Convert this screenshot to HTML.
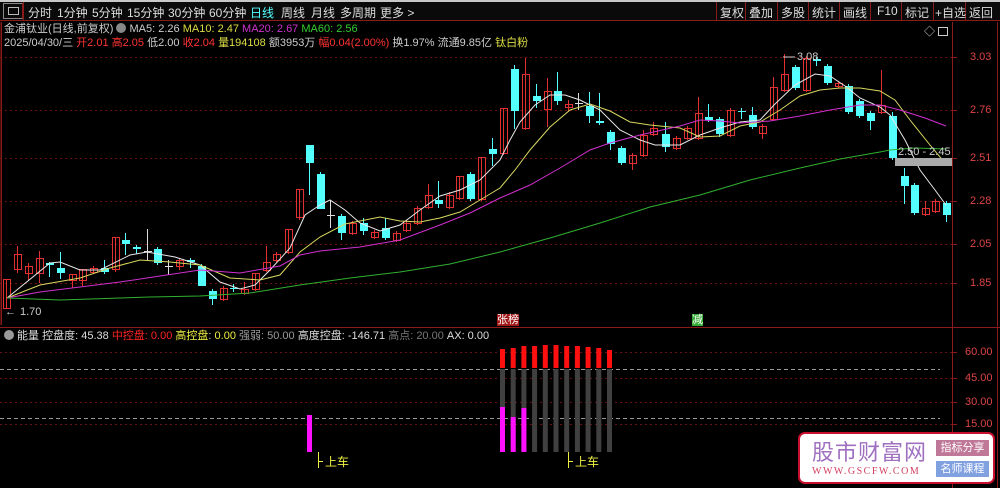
<!DOCTYPE html>
<html><head><meta charset="utf-8"><style>
*{margin:0;padding:0;box-sizing:border-box}
body{width:1000px;height:488px;background:#000;overflow:hidden;font-family:"Liberation Sans","Noto Sans CJK SC",sans-serif;position:relative;color:#ddd}
.t{position:absolute;white-space:nowrap;font-size:11px;line-height:14px}
#tb{position:absolute;left:0;top:0;width:1000px;height:21px;background:#0a0a0a;border-bottom:1px solid #8b1a1a;border-top:2px solid #c8c8c8}
#tb span{position:absolute;top:2px;font-size:12px;color:#ddd}
.rb{position:absolute;top:0;height:19px;border-left:1px solid #8b1a1a}
</style></head><body>
<div id="tb">
<div style="position:absolute;left:3px;top:1px;width:20px;height:16px;border:1px solid #888;border-right:1px solid #8b1a1a"></div>
<div style="position:absolute;left:8px;top:5px;width:11px;height:8px;border:1px solid #bbb"></div>
<div class="rb" style="left:23px"></div>
<span style="left:28px">分时</span><span style="left:57px">1分钟</span><span style="left:92px">5分钟</span><span style="left:127px">15分钟</span><span style="left:168px">30分钟</span><span style="left:209px">60分钟</span><span style="left:250px;color:#5ff">日线</span><span style="left:281px">周线</span><span style="left:311px">月线</span><span style="left:340px">多周期</span><span style="left:380px">更多 &gt;</span>
<div class="rb" style="left:716px"></div><div class="rb" style="left:745px"></div><div class="rb" style="left:777px"></div><div class="rb" style="left:808px"></div><div class="rb" style="left:839px"></div><div class="rb" style="left:870px"></div><div class="rb" style="left:901px"></div><div class="rb" style="left:933px"></div><div class="rb" style="left:965px"></div>
<span style="left:720px">复权</span><span style="left:749px">叠加</span><span style="left:781px">多股</span><span style="left:812px">统计</span><span style="left:843px">画线</span><span style="left:877px">F10</span><span style="left:905px">标记</span><span style="left:935px">+自选</span><span style="left:969px">返回</span>
</div>
<div class="t" style="left:4px;top:22px;color:#ccc">金浦钛业(日线,前复权) <span style="display:inline-block;width:10px;height:10px;border-radius:5px;background:#888;vertical-align:-1px"></span> MA5: 2.26 <span style="color:#dd4">MA10: 2.47</span> <span style="color:#c3c">MA20: 2.67</span> <span style="color:#3c3">MA60: 2.56</span></div>
<div class="t" style="left:4px;top:36px;color:#ccc">2025/04/30/三 <span style="color:#f33">开2.01 高2.05</span> 低2.00 <span style="color:#f33">收2.04</span> <span style="color:#dd4">量194108</span> 额3953万 <span style="color:#f33">幅0.04(2.00%)</span> 换1.97% 流通9.85亿 <span style="color:#dd4">钛白粉</span></div>
<div class="t" style="left:924px;top:25px;color:#ccc;font-size:11px">◇</div>
<div style="position:absolute;left:938px;top:27px;width:10px;height:9px;border:1px solid #ccc"></div>
<svg id="s" width="1000" height="488" style="position:absolute;left:0;top:0" xmlns="http://www.w3.org/2000/svg"></svg>
<div class="t" style="left:20px;top:305px;color:#ccc">1.70</div>
<div class="t" style="left:5px;top:305px;color:#ccc">←</div>
<div class="t" style="left:797px;top:50px;color:#ccc;font-size:11px">3.08</div>
<div class="t" style="left:898px;top:145px;color:#ccc;font-size:11px">2.50 - 2.45</div>
<div class="t" style="left:497px;top:314px;color:#fff;background:#a01818;font-size:11px;line-height:12px">张榜</div>
<div class="t" style="left:692px;top:314px;color:#fff;background:#3a3;font-size:11px;line-height:12px">减</div>
<div class="t" style="left:4px;top:329px;color:#ddd"><span style="display:inline-block;width:10px;height:10px;border-radius:5px;background:#999;vertical-align:-1px"></span> 能量 控盘度: 45.38 <span style="color:#f22">中控盘: 0.00</span> <span style="color:#ee4">高控盘</span>: <span style="color:#ee4">0.00</span> <span style="color:#999">强弱: 50.00</span> 高度控盘: -146.71 <span style="color:#777">高点: 20.00</span> AX: 0.00</div>
<div class="t" style="left:325px;top:455px;color:#ee4;font-size:12px">上车</div>
<div class="t" style="left:575px;top:455px;color:#ee4;font-size:12px">上车</div>
<div id="ax"></div>
<div style="position:absolute;left:798px;top:432px;width:197px;height:52px;background:#fff;border:2px solid #c8102e;border-radius:7px">
<div style="position:absolute;left:12px;top:4px;font-size:22px;line-height:26px;color:#a070c0;font-family:'Noto Sans CJK SC',sans-serif;letter-spacing:1px">股市财富网</div>
<div style="position:absolute;left:12px;top:32px;font-size:10px;color:#d04060;font-family:'Liberation Serif',serif;letter-spacing:1.5px">WWW.GSCFW.COM</div>
<div style="position:absolute;left:136px;top:6px;width:53px;height:16px;background:#c07898;color:#fff;font-size:11px;line-height:16px;text-align:center">指标分享</div>
<div style="position:absolute;left:136px;top:27px;width:53px;height:16px;background:#80a0e0;color:#fff;font-size:11px;line-height:16px;text-align:center">名师课程</div>
</div>
<script>
var s='';
function L(x1,y1,x2,y2,c,d,w){s+='<line x1="'+x1+'" y1="'+y1+'" x2="'+x2+'" y2="'+y2+'" stroke="'+c+'" stroke-width="'+(w||1)+'"'+(d?' stroke-dasharray="'+d+'"':'')+'/>';}
[57,110,158,201,244,283].forEach(function(y){L(0,y+.5,952,y+.5,'#6a1010','2,3');});
[352,378,402,424].forEach(function(y){L(0,y+.5,952,y+.5,'#6a1010','2,3');});
L(0,369.5,940,369.5,'#999','4,3');L(0,418.5,940,418.5,'#999','4,3');
L(0,22,0,325,'#8b1a1a');L(1.5,22,1.5,325,'#8b1a1a');
L(0,327.5,1000,327.5,'#8b1a1a');
L(952.5,22,952.5,488,'#8b1a1a');L(997.5,22,997.5,488,'#8b1a1a');
var ax='';
[[3.03,57],[2.76,110],[2.51,158],[2.28,201],[2.05,244],[1.85,283]].forEach(function(a){ax+='<div class="t" style="left:970px;top:'+(a[1]-7)+'px;color:#d44;font-size:11px">'+a[0].toFixed(2)+'</div>';L(952,a[1]+.5,957,a[1]+.5,'#8b1a1a');});
[[60,352],[45,378],[30,402],[15,424]].forEach(function(a){ax+='<div class="t" style="left:965px;top:'+(a[1]-7)+'px;color:#d44;font-size:11px">'+a[0].toFixed(2)+'</div>';L(952,a[1]+.5,957,a[1]+.5,'#8b1a1a');});
document.getElementById('ax').innerHTML=ax;
var C=[[6,279,308,279,308,'r'],[17,254,269,246,273,'r'],[28,266,273,263,281,'r'],[39,258,273,251,283,'r'],[49,263,265,262,277,'c'],[60,268,273,252,279,'c'],[72,274,280,274,288,'r'],[82,269,280,269,286,'r'],[93,268,272,266,274,'r'],[104,268,272,260,274,'c'],[115,237,269,237,272,'r'],[125,240,244,233,255,'c'],[136,247,249,245,254,'c'],[147,251,252,229,260,'w'],[157,249,263,247,265,'c'],[168,266,267,260,275,'w'],[179,260,266,258,270,'r'],[190,260,262,258,268,'c'],[201,266,286,264,286,'c'],[212,291,299,289,305,'c'],[223,288,299,286,301,'r'],[233,288,289,284,292,'c'],[244,289,293,282,295,'r'],[255,273,289,273,291,'r'],[266,262,270,246,272,'r'],[276,254,260,252,262,'r'],[288,229,252,229,254,'r'],[299,189,217,189,220,'r'],[309,145,163,145,195,'c'],[320,174,209,172,209,'c'],[330,215,216,200,228,'w'],[341,216,233,214,240,'c'],[352,223,233,221,235,'r'],[363,223,231,218,235,'c'],[374,232,237,230,239,'r'],[385,228,238,218,240,'c'],[396,233,240,231,242,'r'],[406,223,230,220,232,'r'],[417,208,223,206,225,'r'],[428,195,207,184,209,'r'],[438,200,204,181,208,'c'],[449,195,207,192,209,'r'],[459,176,198,176,200,'r'],[470,174,199,172,201,'c'],[481,157,199,157,201,'r'],[492,149,154,138,166,'c'],[503,108,153,108,155,'r'],[514,69,111,65,129,'c'],[525,74,128,58,130,'r'],[536,96,101,84,108,'c'],[547,91,109,78,127,'r'],[557,91,101,72,105,'c'],[568,104,107,100,112,'r'],[578,103,104,93,110,'w'],[589,106,116,92,123,'c'],[599,121,123,93,125,'c'],[610,132,144,130,150,'c'],[621,148,163,146,165,'c'],[632,155,163,153,170,'r'],[643,135,155,130,157,'r'],[653,128,134,122,136,'r'],[665,134,147,122,152,'c'],[676,138,148,136,150,'r'],[687,128,138,126,140,'r'],[698,113,138,97,140,'r'],[708,117,120,104,122,'c'],[719,119,134,117,137,'c'],[730,110,135,108,137,'r'],[741,111,112,108,119,'c'],[752,115,127,107,129,'c'],[762,126,133,124,139,'r'],[773,87,119,77,121,'r'],[784,74,90,54,92,'r'],[795,67,88,65,90,'c'],[806,58,90,56,92,'r'],[816,59,61,57,66,'c'],[827,66,83,64,85,'c'],[838,83,86,81,88,'r'],[848,86,112,84,114,'c'],[859,101,116,99,118,'c'],[870,113,121,111,130,'c'],[881,105,112,70,114,'r'],[892,116,158,112,160,'c'],[904,176,186,168,204,'c'],[914,185,213,183,215,'c'],[925,208,214,201,216,'r'],[935,201,211,199,213,'r'],[946,203,215,201,222,'c']];
C.forEach(function(c){var x=c[0],col=c[5]=='r'?'#e03030':(c[5]=='c'?'#54ffff':'#ddd');
L(x+.5,c[3],x+.5,c[4],col);
var h=Math.max(1,c[2]-c[1]);
if(c[5]=='r')s+='<rect x="'+(x-3)+'.5" y="'+c[1]+'.5" width="7" height="'+h+'" fill="none" stroke="'+col+'"/>';
else s+='<rect x="'+(x-3)+'" y="'+c[1]+'" width="8" height="'+h+'" fill="'+col+'"/>';});
function P(pts,c){s+='<polyline fill="none" stroke="'+c+'" stroke-width="1" points="'+pts+'"/>';}
P('7,298 50,263 60,262 80,270 100,270 130,255 147,252 175,257 200,265 220,282 240,289 255,285 270,270 290,248 305,215 320,205 330,200 345,210 360,223 380,231 400,225 420,210 440,196 460,190 480,180 500,160 510,140 520,122 535,105 550,95 565,95 580,100 600,110 620,130 640,140 655,145 680,145 700,135 720,128 740,122 760,120 775,104 795,85 815,74 830,76 845,86 860,98 880,107 890,115 905,140 920,170 935,190 946,205','#e8e8e8');
P('7,298 40,285 80,278 110,268 140,260 170,262 200,265 230,278 260,280 280,275 300,252 320,237 345,224 380,217 400,221 420,222 440,218 460,212 480,200 500,188 515,170 530,150 550,127 570,110 590,104 610,111 630,122 650,125 680,128 700,137 720,136 740,126 760,122 780,110 800,96 820,90 840,88 860,88 880,91 895,100 910,120 930,145 945,163','#d8d860');
P('7,298 40,292 80,287 120,282 160,276 200,270 240,273 280,266 300,255 320,251 360,247 400,240 440,225 470,213 500,198 530,185 560,168 590,150 610,143 640,135 680,126 700,120 720,121 740,123 770,121 800,116 830,110 860,105 880,105 900,110 925,118 946,126','#d030d0');
P('7,298 60,300 150,297 200,296 250,293 300,285 350,278 400,272 450,264 500,252 550,238 600,223 650,207 700,195 750,180 800,168 840,159 880,152 890,150 915,148 946,149','#30b030');
s+='<rect x="895" y="158" width="57" height="8" fill="#aaa"/>';
L(783,57,795,57,'#ccc');
var tops=[349,348,346,346,345,345,346,346,347,348,350];
for(var i=0;i<11;i++){var x=502+i*10.7;
s+='<rect x="'+(x-2)+'" y="'+tops[i]+'" width="5" height="'+(368-tops[i])+'" fill="#ff1010"/>';
s+='<rect x="'+(x-2)+'" y="369" width="5" height="83" fill="#404040"/>';}
[[502,407],[512.7,417],[523.4,408]].forEach(function(b){s+='<rect x="'+(b[0]-2)+'" y="'+b[1]+'" width="5" height="'+(452-b[1])+'" fill="#ff10ff"/>';});
s+='<rect x="307" y="415" width="5" height="37" fill="#ff10ff"/>';
L(318.5,452,318.5,468,'#ee4');L(318,461.5,323,461.5,'#ee4');
L(568.5,452,568.5,468,'#ee4');L(568,461.5,573,461.5,'#ee4');
document.getElementById('s').innerHTML=s;
</script>
</body></html>
